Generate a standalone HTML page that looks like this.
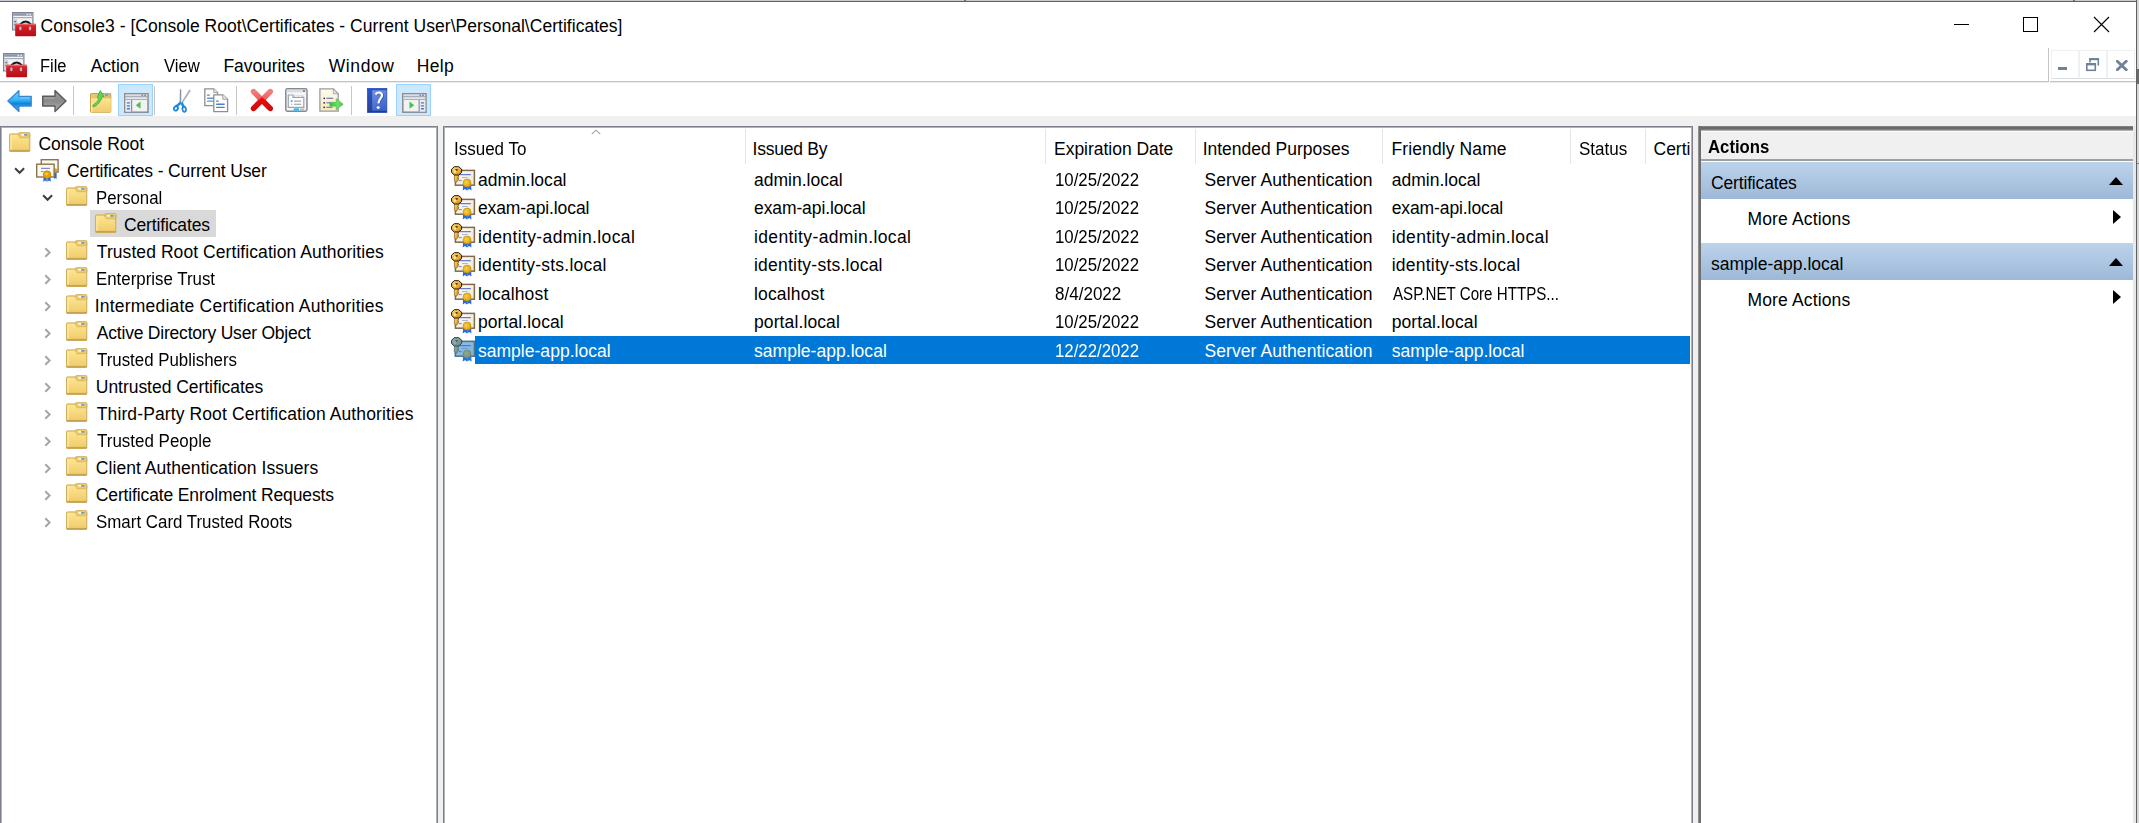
<!DOCTYPE html>
<html><head><meta charset="utf-8"><title>Console3</title><style>
html,body{margin:0;padding:0;}
body{width:2139px;height:823px;overflow:hidden;position:relative;background:#fff;font-family:"Liberation Sans",sans-serif;font-size:17.5px;color:#000;}
.t{position:absolute;white-space:nowrap;line-height:20px;}
.ic{position:absolute;display:block;}
.r{position:absolute;}
</style></head><body>
<svg width="0" height="0" style="position:absolute"><defs>
<linearGradient id="fgrad" x1="0" y1="0" x2="0" y2="1"><stop offset="0" stop-color="#fde58f"/><stop offset="1" stop-color="#f0cc6c"/></linearGradient>
<linearGradient id="paper" x1="0" y1="0" x2="1" y2="1"><stop offset="0" stop-color="#fffdf6"/><stop offset="1" stop-color="#ece6d6"/></linearGradient>
<radialGradient id="seal" cx="0.4" cy="0.4" r="0.7"><stop offset="0" stop-color="#f8d24a"/><stop offset="1" stop-color="#d99a00"/></radialGradient>
<linearGradient id="keyg" x1="0" y1="0" x2="1" y2="1"><stop offset="0" stop-color="#fbe08a"/><stop offset="0.55" stop-color="#eeb13a"/><stop offset="1" stop-color="#c8841a"/></linearGradient>
<filter id="seltint" x="0" y="0" width="1" height="1" color-interpolation-filters="sRGB"><feFlood flood-color="#1a80dc" flood-opacity="0.5"/><feComposite in2="SourceAlpha" operator="in"/><feBlend in2="SourceGraphic" mode="normal"/></filter>
<linearGradient id="bluehdr" x1="0" y1="0" x2="0" y2="1"><stop offset="0" stop-color="#bcd3eb"/><stop offset="1" stop-color="#9db8d8"/></linearGradient>
</defs></svg>
<div class="r" style="left:0;top:0;width:2139px;height:1px;background:#c9cacd"></div>
<div class="r" style="left:0;top:1px;width:2137px;height:1px;background:#5f6062"></div>
<div class="r" style="left:964px;top:0;width:2px;height:1px;background:#707070"></div>
<div class="r" style="left:2073px;top:0;width:2px;height:1px;background:#707070"></div>
<div class="r" style="left:2136px;top:0;width:1px;height:823px;background:#5f6062"></div>
<div class="r" style="left:2137px;top:0;width:2px;height:823px;background:#d6d6d6"></div>
<div class="r" style="left:2137px;top:69px;width:2px;height:15px;background:#6a6a6a"></div>
<div class="r" style="left:2137px;top:163px;width:2px;height:1px;background:#3aa08a"></div>
<svg class="ic" style="left:12px;top:12px" width="25" height="25" viewBox="0 0 25 25">
<rect x="0.6" y="0.6" width="20.3" height="17.3" fill="#f2f3f6" stroke="#7d8594" stroke-width="1.2"/>
<rect x="1.2" y="1.2" width="19.1" height="2.6" fill="#8f98a8"/>
<rect x="14.5" y="1.8" width="1.6" height="1.4" fill="#e8ebf0"/><rect x="17.3" y="1.8" width="1.6" height="1.4" fill="#e8ebf0"/>
<rect x="1.2" y="5" width="19.1" height="1.2" fill="#a3abb8"/>
<rect x="1.2" y="7.2" width="4" height="10" fill="#c9ced8"/>
<rect x="2.3" y="9" width="1.8" height="1.2" fill="#6a7384"/><rect x="2.3" y="12" width="1.8" height="1.2" fill="#6a7384"/>
<path d="M8.2 12.3 q5.4 -5.6 10.8 0" stroke="#1a1a1a" stroke-width="1.8" fill="none"/>
<defs><linearGradient id="tbx" x1="0" y1="0" x2="0" y2="1"><stop offset="0" stop-color="#e3343a"/><stop offset="0.35" stop-color="#cf1b23"/><stop offset="1" stop-color="#b30f18"/></linearGradient></defs>
<rect x="3.2" y="11.8" width="20.8" height="12.4" rx="0.6" fill="url(#tbx)"/>
<rect x="3.2" y="11.8" width="20.8" height="1" fill="#f06a6e"/>
<rect x="7.3" y="14.6" width="2.2" height="3.6" rx="1" fill="#b9bcc2"/><rect x="16.9" y="14.6" width="2.2" height="3.6" rx="1" fill="#b9bcc2"/>
</svg><div class="t" style="left:40.60px;top:15.94px;letter-spacing:0.030px;">Console3 - [Console Root\Certificates - Current User\Personal\Certificates]</div>
<div class="r" style="left:1954px;top:24px;width:15px;height:1px;background:#000"></div>
<div class="r" style="left:2023px;top:17px;width:13px;height:13px;border:1px solid #000"></div>
<svg class="ic" style="left:2093px;top:16px" width="17" height="17" viewBox="0 0 17 17"><path d="M1 1 L16 16 M16 1 L1 16" stroke="#000" stroke-width="1.1"/></svg>
<svg class="ic" style="left:3px;top:53px" width="25" height="25" viewBox="0 0 25 25">
<rect x="0.6" y="0.6" width="20.3" height="17.3" fill="#f2f3f6" stroke="#7d8594" stroke-width="1.2"/>
<rect x="1.2" y="1.2" width="19.1" height="2.6" fill="#8f98a8"/>
<rect x="14.5" y="1.8" width="1.6" height="1.4" fill="#e8ebf0"/><rect x="17.3" y="1.8" width="1.6" height="1.4" fill="#e8ebf0"/>
<rect x="1.2" y="5" width="19.1" height="1.2" fill="#a3abb8"/>
<rect x="1.2" y="7.2" width="4" height="10" fill="#c9ced8"/>
<rect x="2.3" y="9" width="1.8" height="1.2" fill="#6a7384"/><rect x="2.3" y="12" width="1.8" height="1.2" fill="#6a7384"/>
<path d="M8.2 12.3 q5.4 -5.6 10.8 0" stroke="#1a1a1a" stroke-width="1.8" fill="none"/>
<defs><linearGradient id="tbx" x1="0" y1="0" x2="0" y2="1"><stop offset="0" stop-color="#e3343a"/><stop offset="0.35" stop-color="#cf1b23"/><stop offset="1" stop-color="#b30f18"/></linearGradient></defs>
<rect x="3.2" y="11.8" width="20.8" height="12.4" rx="0.6" fill="url(#tbx)"/>
<rect x="3.2" y="11.8" width="20.8" height="1" fill="#f06a6e"/>
<rect x="7.3" y="14.6" width="2.2" height="3.6" rx="1" fill="#b9bcc2"/><rect x="16.9" y="14.6" width="2.2" height="3.6" rx="1" fill="#b9bcc2"/>
</svg><div class="t" style="left:39.66px;top:56.24px;transform:scaleX(0.9407);transform-origin:0 0;">File</div>
<div class="t" style="left:90.70px;top:56.24px;letter-spacing:-0.020px;">Action</div>
<div class="t" style="left:164.10px;top:56.24px;transform:scaleX(0.9526);transform-origin:0 0;">View</div>
<div class="t" style="left:223.40px;top:56.24px;letter-spacing:-0.044px;">Favourites</div>
<div class="t" style="left:328.70px;top:56.24px;letter-spacing:0.600px;">Window</div>
<div class="t" style="left:416.80px;top:56.24px;letter-spacing:0.333px;">Help</div>
<div class="r" style="left:0;top:81px;width:2049px;height:1px;background:#c4c4c4"></div>
<div class="r" style="left:0;top:82px;width:2049px;height:1px;background:#eaeaea"></div>
<div class="r" style="left:2048px;top:48px;width:1px;height:34px;background:#c4c4c4"></div>
<div class="r" style="left:2051px;top:50px;width:26px;height:27px;border:1px solid #eef0f3;border-bottom-color:#d8dbe0"></div>
<div class="r" style="left:2079px;top:50px;width:26px;height:27px;border:1px solid #eef0f3;border-bottom-color:#d8dbe0"></div>
<div class="r" style="left:2107px;top:50px;width:26px;height:27px;border:1px solid #eef0f3;border-bottom-color:#d8dbe0"></div>
<div class="r" style="left:2050px;top:81px;width:86px;height:1px;background:#c4c4c4"></div>
<div class="r" style="left:2050px;top:82px;width:86px;height:1px;background:#eaeaea"></div>
<div class="r" style="left:2058px;top:67px;width:9px;height:3.4px;background:#6f8296"></div>
<svg class="ic" style="left:2086px;top:58px" width="14" height="14" viewBox="0 0 14 14"><path d="M4 4.5 V0.8 H12.3 V7.5" fill="none" stroke="#6f8296" stroke-width="1.6"/><rect x="3.5" y="0" width="9.5" height="2.2" fill="#6f8296"/><rect x="0.8" y="5.8" width="8.5" height="6.5" fill="#fff" stroke="#6f8296" stroke-width="1.6"/><rect x="0" y="5" width="10" height="2.4" fill="#6f8296"/></svg>
<svg class="ic" style="left:2116px;top:60px" width="12" height="11" viewBox="0 0 12 11"><path d="M1.3 1.3 L10.2 9.7 M10.2 1.3 L1.3 9.7" stroke="#6f8296" stroke-width="2.8" stroke-linecap="square"/></svg>
<div class="r" style="left:118px;top:84px;width:33px;height:30px;background:#cce8ff;border:1px solid #99d1ff"></div>
<div class="r" style="left:396px;top:84px;width:33px;height:30px;background:#cce8ff;border:1px solid #99d1ff"></div>
<div class="r" style="left:73px;top:86px;width:1px;height:29px;background:#c6c6c6"></div>
<div class="r" style="left:154px;top:86px;width:1px;height:29px;background:#c6c6c6"></div>
<div class="r" style="left:236px;top:86px;width:1px;height:29px;background:#c6c6c6"></div>
<div class="r" style="left:351px;top:86px;width:1px;height:29px;background:#c6c6c6"></div>
<svg class="ic" style="left:7px;top:90px" width="25" height="23" viewBox="0 0 25 23">
<defs><linearGradient id="ba" x1="0" y1="0" x2="0" y2="1"><stop offset="0" stop-color="#7dcdfc"/><stop offset="0.45" stop-color="#35b4f8"/><stop offset="0.62" stop-color="#0c84e0"/><stop offset="1" stop-color="#4cb8f4"/></linearGradient></defs>
<path d="M0.9 11 L11.9 0.6 V6.3 H24.2 V16 H11.9 V21.5 Z" fill="url(#ba)" stroke="#3a86cc" stroke-width="1.3" stroke-linejoin="round"/>
<path d="M13 8 H22.5" stroke="#9fdcff" stroke-width="0.8" opacity="0.7"/></svg>
<svg class="ic" style="left:42px;top:90px" width="25" height="23" viewBox="0 0 25 23">
<defs><linearGradient id="fa" x1="0" y1="0" x2="0" y2="1"><stop offset="0" stop-color="#9a9a9a"/><stop offset="0.5" stop-color="#8a8a8a"/><stop offset="1" stop-color="#b0b0b0"/></linearGradient></defs>
<path d="M24 11 L13 0.6 V6.3 H0.7 V16 H13 V21.5 Z" fill="url(#fa)" stroke="#5a5a5a" stroke-width="1.4" stroke-linejoin="round"/>
<path d="M2 8 H12" stroke="#c8c8c8" stroke-width="0.8" opacity="0.6"/></svg>
<svg class="ic" style="left:90px;top:90px" width="22" height="23" viewBox="0 0 22 23">
<rect x="0.5" y="3.5" width="20.3" height="18.8" rx="0.8" fill="#e9c66a" stroke="#c9a24e"/>
<rect x="14" y="3.4" width="5.5" height="3.4" rx="1" fill="#ead49a" stroke="#c9a24e" stroke-width="0.6"/><rect x="15" y="4.3" width="3.4" height="1.4" fill="#4d90dc"/>
<path d="M1 22.3 V8.5 h19.8 v13.8z" fill="url(#fgrad)"/>
<rect x="1" y="8.5" width="1.6" height="13.6" fill="#fbe9a5"/>
<path d="M2.6 15.5 C4.5 14 7.8 12 8.8 8.5 L7.2 7.4 L10.2 0.6 L14 6.6 L12 6.8 C11.2 11.5 7.5 15.2 3.5 17z" fill="#5ed65a" stroke="#34a034" stroke-width="0.7" stroke-linejoin="round"/>
</svg>
<svg class="ic" style="left:124px;top:93px" width="25" height="20" viewBox="0 0 25 20">
<rect x="0.8" y="0.8" width="23.2" height="18.4" fill="#f2f2f3" stroke="#868b93" stroke-width="1.5"/>
<rect x="1.5" y="1.5" width="21.8" height="1.8" fill="#d9dce0"/><rect x="17.5" y="1.6" width="1.6" height="1.5" fill="#7c8390"/><rect x="20.3" y="1.6" width="1.6" height="1.5" fill="#7c8390"/>
<rect x="1.5" y="3.4" width="21.8" height="1" fill="#7f8792"/><rect x="1.5" y="4.4" width="21.8" height="1.6" fill="#e2e5e9"/><rect x="1.5" y="6" width="21.8" height="1" fill="#a9afb8"/>
<rect x="1.5" y="7" width="5.6" height="11.5" fill="#e9ebee"/><rect x="7.1" y="7" width="1.1" height="11.5" fill="#7f8792"/>
<rect x="2.8" y="9.3" width="3.2" height="1.3" rx="0.6" fill="#3f79c4"/><rect x="2.8" y="12.2" width="3.2" height="1.3" rx="0.6" fill="#3f79c4"/><rect x="2.8" y="15.1" width="3.2" height="1.3" rx="0.6" fill="#3f79c4"/>
<path d="M11.8 12.2 L16.5 8.6 V15.8z" fill="#4cbf4a"/></svg>
<svg class="ic" style="left:173px;top:88px" width="19" height="25" viewBox="0 0 19 25">
<path d="M6.9 0.6 L8.3 2 L8.2 15.5 L6.6 15.5z" fill="#8b939e"/>
<path d="M16.3 1.6 L17.8 2.8 L9.2 15.8 L8 14.8z" fill="#a9b1bb"/>
<path d="M8 14.5 L3.2 18.4" stroke="#1d8fe6" stroke-width="2.6"/>
<path d="M8.6 14.6 L10.6 19" stroke="#1d8fe6" stroke-width="2.6"/>
<ellipse cx="2.9" cy="20.4" rx="2.6" ry="2.9" transform="rotate(35 2.9 20.4)" fill="#1a8ee8" stroke="#0f6fc0" stroke-width="0.5"/>
<ellipse cx="2.9" cy="20.4" rx="1" ry="1.3" transform="rotate(35 2.9 20.4)" fill="#e8f4ff"/>
<ellipse cx="11.2" cy="21.2" rx="2.3" ry="3.3" transform="rotate(-10 11.2 21.2)" fill="#1a8ee8" stroke="#0f6fc0" stroke-width="0.5"/>
<ellipse cx="11.2" cy="21.4" rx="0.9" ry="1.6" transform="rotate(-10 11.2 21.4)" fill="#e8f4ff"/>
</svg>
<svg class="ic" style="left:204px;top:88px" width="25" height="25" viewBox="0 0 25 25">
<path d="M0.8 0.8 H9.8 L13.6 4.6 V17.6 H0.8z" fill="#fdfdfd" stroke="#8f8f8f" stroke-width="1.3"/>
<path d="M9.8 0.8 V4.6 H13.6" fill="#e8e8e8" stroke="#9a9a9a" stroke-width="0.9"/>
<rect x="3" y="6.5" width="2.8" height="1.3" rx="0.6" fill="#4d80c8"/><rect x="3" y="9.6" width="8" height="1.3" rx="0.6" fill="#6b90c8"/><rect x="3" y="12.5" width="8" height="1.3" rx="0.6" fill="#6b90c8"/>
<path d="M9.8 6.8 H18.8 L23.6 11.2 V23.6 H9.8z" fill="#fdfdfd" stroke="#8f8f8f" stroke-width="1.3"/>
<path d="M18.8 6.8 V11.2 H23.6" fill="#e8e8e8" stroke="#9a9a9a" stroke-width="0.9"/>
<rect x="12" y="12.5" width="2.8" height="1.3" rx="0.6" fill="#4d80c8"/><rect x="12" y="15.6" width="8.8" height="1.4" rx="0.7" fill="#4d80c8"/><rect x="12" y="18.7" width="8.8" height="1.4" rx="0.7" fill="#4d80c8"/></svg>
<svg class="ic" style="left:250px;top:88px" width="24" height="24" viewBox="0 0 24 24">
<defs><linearGradient id="xg" x1="0" y1="0" x2="0" y2="1"><stop offset="0" stop-color="#f47b7b"/><stop offset="0.42" stop-color="#f06060"/><stop offset="0.55" stop-color="#e80c0c"/><stop offset="1" stop-color="#d00a0a"/></linearGradient></defs>
<g stroke="url(#xg)" stroke-width="5.6" stroke-linecap="round"><path d="M3.6 3.6 L20.2 20.4"/><path d="M20.2 3.6 L3.6 20.4"/></g>
<path d="M12 9 L8 13 L12 16.5 L16 13z" fill="#e80a0a"/>
</svg>
<svg class="ic" style="left:285px;top:88px" width="23" height="24" viewBox="0 0 23 24">
<rect x="0.8" y="0.8" width="21.2" height="22.4" rx="1.6" fill="#f6f6f7" stroke="#85898f" stroke-width="1.5"/>
<rect x="1.6" y="1.7" width="19.6" height="2.6" fill="#d9dde2"/><rect x="18" y="2" width="2" height="1.8" fill="#6a7fa8"/>
<path d="M3.3 7 H8 V9.3 H18.8 V19.3 H3.3z" fill="#fff" stroke="#9ea3b0" stroke-width="1.2"/>
<rect x="8.5" y="7.4" width="9.8" height="1.6" fill="#c4c8d4"/><rect x="10" y="7.8" width="2.6" height="0.9" fill="#fff"/><rect x="13.8" y="7.8" width="2.6" height="0.9" fill="#fff"/>
<circle cx="6.7" cy="13.1" r="1" fill="#1ea8f5"/><rect x="9" y="12.6" width="7.2" height="1.1" fill="#9a9ea4"/>
<circle cx="6.7" cy="16.2" r="0.7" fill="#a8acb2"/><rect x="9" y="15.7" width="7.2" height="1.1" fill="#9a9ea4"/>
<rect x="8.8" y="20.4" width="5.2" height="2.2" fill="#22b8f8"/><rect x="15" y="20.6" width="4.3" height="1.8" fill="#b5b9be"/></svg>
<svg class="ic" style="left:319px;top:88px" width="25" height="24" viewBox="0 0 25 24">
<defs><linearGradient id="exg" x1="0" y1="0" x2="0" y2="1"><stop offset="0" stop-color="#fffcee"/><stop offset="1" stop-color="#f6e9bf"/></linearGradient>
<linearGradient id="arg" x1="0" y1="0" x2="1" y2="0"><stop offset="0" stop-color="#3cb83c"/><stop offset="0.6" stop-color="#6ee06a"/><stop offset="1" stop-color="#3cc43c"/></linearGradient></defs>
<path d="M0.9 0.9 H14.3 L19.2 5.8 V23.1 H0.9z" fill="url(#exg)" stroke="#9b9b9b" stroke-width="1.3"/>
<path d="M14.3 0.9 V5.8 H19.2z" fill="#e4e4e4" stroke="#a0a0a0" stroke-width="0.8"/>
<circle cx="5.2" cy="10.3" r="0.9" fill="#333"/><rect x="7.4" y="9.7" width="6.8" height="1.2" fill="#7a74b4"/>
<circle cx="5.2" cy="14.8" r="0.9" fill="#333"/><rect x="7.4" y="14.2" width="4" height="1.2" fill="#7a74b4"/>
<circle cx="5.2" cy="19.3" r="0.9" fill="#333"/><rect x="7.4" y="18.7" width="6" height="1.2" fill="#7a74b4"/>
<path d="M10.8 14.2 H17.2 V10.6 L24.2 16.2 L17.2 21.8 V18.2 H10.8z" fill="url(#arg)" stroke="#49b049" stroke-width="0.5" stroke-linejoin="round"/></svg>
<svg class="ic" style="left:367px;top:88px" width="21" height="25" viewBox="0 0 21 25">
<defs><linearGradient id="hg" x1="0" y1="0" x2="0.4" y2="1"><stop offset="0" stop-color="#7f9ce9"/><stop offset="1" stop-color="#3c64d0"/></linearGradient>
<linearGradient id="hl" x1="0" y1="0" x2="0" y2="1"><stop offset="0" stop-color="#2456d0"/><stop offset="1" stop-color="#2c4290"/></linearGradient></defs>
<rect x="0.4" y="0.4" width="19.4" height="24" fill="url(#hg)" stroke="#2c4cb8" stroke-width="0.8"/>
<rect x="0.8" y="0.8" width="4.4" height="23.2" fill="url(#hl)"/>
<rect x="0.8" y="22.8" width="19" height="1.4" fill="#2a3a78"/><rect x="0.8" y="0.8" width="19" height="1.4" fill="#2a50c8"/>
<path d="M8.8 6.6 C9.8 3.6 15.6 3.8 15 7.6 C14.6 10.4 11.8 10.8 11.4 15.4" stroke="#2a3c90" stroke-width="2.4" fill="none" opacity="0.45" transform="translate(0.9 0.6)"/>
<path d="M8.8 6.6 C9.8 3.6 15.6 3.8 15 7.6 C14.6 10.4 11.8 10.8 11.4 15.4" stroke="#fff" stroke-width="2.2" fill="none"/>
<ellipse cx="11.2" cy="19.6" rx="1.6" ry="1.3" fill="#fff"/></svg>
<svg class="ic" style="left:402px;top:93px" width="25" height="20" viewBox="0 0 25 20">
<rect x="0.8" y="0.8" width="23.2" height="18.4" fill="#f2f2f3" stroke="#868b93" stroke-width="1.5"/>
<rect x="1.5" y="1.5" width="21.8" height="1.8" fill="#d9dce0"/><rect x="17.5" y="1.6" width="1.6" height="1.5" fill="#7c8390"/><rect x="20.3" y="1.6" width="1.6" height="1.5" fill="#7c8390"/>
<rect x="1.5" y="3.4" width="21.8" height="1" fill="#7f8792"/><rect x="1.5" y="4.4" width="21.8" height="1.6" fill="#e2e5e9"/><rect x="1.5" y="6" width="21.8" height="1" fill="#a9afb8"/>
<rect x="17.7" y="7" width="5.6" height="11.5" fill="#e9ebee"/><rect x="16.6" y="7" width="1.1" height="11.5" fill="#7f8792"/>
<rect x="18.9" y="9.3" width="3.2" height="1.3" rx="0.6" fill="#3f79c4"/><rect x="18.9" y="12.2" width="3.2" height="1.3" rx="0.6" fill="#3f79c4"/><rect x="18.9" y="15.1" width="3.2" height="1.3" rx="0.6" fill="#3f79c4"/>
<path d="M7.5 8.6 L12.2 12.2 L7.5 15.8z" fill="#4cbf4a"/></svg>
<div class="r" style="left:0;top:116px;width:2136px;height:707px;background:#f0f0f0"></div>
<div class="r" style="left:0;top:126px;width:438px;height:697px;background:#fff;box-sizing:border-box;border-left:1px solid #7b8089;border-top:1px solid #7b8089;border-right:1px solid #7b8089;box-shadow:inset 1px 1px 0 #aeb2b9,inset -1px 0 0 #aeb2b9"></div>
<div class="r" style="left:443px;top:126px;width:1250px;height:697px;background:#fff;box-sizing:border-box;border-left:1px solid #7b8089;border-top:1px solid #7b8089;border-right:1px solid #7b8089;box-shadow:inset 1px 1px 0 #aeb2b9,inset -1px 0 0 #aeb2b9"></div>
<div class="r" style="left:1698px;top:126px;width:438px;height:697px;background:#fff;box-sizing:border-box;border-right:3px solid #e8e8e8"></div>
<div class="r" style="left:1698px;top:126px;width:435px;height:5px;background:linear-gradient(#8c8c8c,#6a6a6a 30%,#6a6a6a 62%,#c8c8c8)"></div>
<div class="r" style="left:1698px;top:126px;width:3px;height:697px;background:linear-gradient(90deg,#a8a8a8,#6e6e6e 40%,#6e6e6e 85%,#8a8a8a)"></div>
<div class="r" style="left:90px;top:210px;width:126px;height:27px;background:#d9d9d9"></div>
<svg class="ic" style="left:9px;top:132px" width="22" height="21" viewBox="0 0 22 21">
<rect x="0.5" y="1.9" width="20.3" height="17.5" rx="0.9" fill="#e6c263" stroke="#d2ae5e" stroke-width="1"/>
<rect x="9.6" y="0.4" width="11.2" height="5.6" rx="1.1" fill="#eaca70" stroke="#d2ae5e" stroke-width="0.9"/>
<rect x="12.4" y="2.1" width="2.8" height="1.5" fill="#ffffff"/><rect x="15.2" y="2.1" width="3.2" height="1.5" fill="#5a9ad8"/>
<path d="M1.3 18.6 V2.8 h7.6 l1.9 3.5 h9.2 v12.3z" fill="url(#fgrad)"/>
<rect x="1.3" y="3" width="1.4" height="15.5" fill="#fbeaa6"/>
<rect x="0.5" y="17.9" width="20.3" height="1.6" fill="#c6a251"/>
</svg><div class="t" style="left:38.50px;top:134.44px;letter-spacing:-0.045px;">Console Root</div>
<svg class="ic" style="left:35px;top:158px" width="24" height="24" viewBox="0 0 24 24">
<rect x="6.3" y="1.7" width="16.8" height="12.3" fill="#fbf8ef" stroke="#8a7350" stroke-width="1.4"/>
<path d="M19 11 v10 l1.3-1 l1.3 1 v-10z" fill="#2466e0"/><circle cx="20" cy="12.5" r="2.2" fill="#e5a507"/>
<rect x="1.7" y="6.2" width="17.4" height="12.8" fill="#fbf8ef" stroke="#8a7350" stroke-width="1.4"/>
<rect x="6" y="9.8" width="9" height="1.1" fill="#7080d0"/><rect x="6" y="13" width="2.5" height="1" fill="#8090d0"/>
<path d="M8.6 19.2 l-0.3 4.5 l1.8-1.2 l1.6 1.2 v-4.5z M12.3 19.2 v4.5 l1.7-1.2 l1.8 1.2 l-0.3-4.5z" fill="#2466e0"/>
<circle cx="12.1" cy="16.6" r="3.8" fill="#e5a507" stroke="#b98000" stroke-width="0.7"/>
<circle cx="11.5" cy="16" r="1.3" fill="#f7d35a"/>
</svg><svg class="ic" style="left:13.5px;top:167px" width="12" height="8" viewBox="0 0 12 8"><path d="M1.1 1.3 L5.6 5.8 L10.1 1.3" stroke="#3f3f3f" stroke-width="2" fill="none"/></svg><div class="t" style="left:67.10px;top:161.44px;letter-spacing:-0.138px;">Certificates - Current User</div>
<svg class="ic" style="left:66px;top:186px" width="22" height="21" viewBox="0 0 22 21">
<rect x="0.5" y="1.9" width="20.3" height="17.5" rx="0.9" fill="#e6c263" stroke="#d2ae5e" stroke-width="1"/>
<rect x="9.6" y="0.4" width="11.2" height="5.6" rx="1.1" fill="#eaca70" stroke="#d2ae5e" stroke-width="0.9"/>
<rect x="12.4" y="2.1" width="2.8" height="1.5" fill="#ffffff"/><rect x="15.2" y="2.1" width="3.2" height="1.5" fill="#5a9ad8"/>
<path d="M1.3 18.6 V2.8 h7.6 l1.9 3.5 h9.2 v12.3z" fill="url(#fgrad)"/>
<rect x="1.3" y="3" width="1.4" height="15.5" fill="#fbeaa6"/>
<rect x="0.5" y="17.9" width="20.3" height="1.6" fill="#c6a251"/>
</svg><svg class="ic" style="left:42.2px;top:194px" width="12" height="8" viewBox="0 0 12 8"><path d="M1.1 1.3 L5.6 5.8 L10.1 1.3" stroke="#3f3f3f" stroke-width="2" fill="none"/></svg><div class="t" style="left:95.84px;top:188.44px;transform:scaleX(0.9597);transform-origin:0 0;">Personal</div>
<svg class="ic" style="left:95px;top:213px" width="22" height="21" viewBox="0 0 22 21">
<rect x="0.5" y="1.9" width="20.3" height="17.5" rx="0.9" fill="#e6c263" stroke="#d2ae5e" stroke-width="1"/>
<rect x="9.6" y="0.4" width="11.2" height="5.6" rx="1.1" fill="#eaca70" stroke="#d2ae5e" stroke-width="0.9"/>
<rect x="12.4" y="2.1" width="2.8" height="1.5" fill="#ffffff"/><rect x="15.2" y="2.1" width="3.2" height="1.5" fill="#5a9ad8"/>
<path d="M1.3 18.6 V2.8 h7.6 l1.9 3.5 h9.2 v12.3z" fill="url(#fgrad)"/>
<rect x="1.3" y="3" width="1.4" height="15.5" fill="#fbeaa6"/>
<rect x="0.5" y="17.9" width="20.3" height="1.6" fill="#c6a251"/>
</svg><div class="t" style="left:124.00px;top:215.44px;letter-spacing:-0.136px;">Certificates</div>
<svg class="ic" style="left:66px;top:240px" width="22" height="21" viewBox="0 0 22 21">
<rect x="0.5" y="1.9" width="20.3" height="17.5" rx="0.9" fill="#e6c263" stroke="#d2ae5e" stroke-width="1"/>
<rect x="9.6" y="0.4" width="11.2" height="5.6" rx="1.1" fill="#eaca70" stroke="#d2ae5e" stroke-width="0.9"/>
<rect x="12.4" y="2.1" width="2.8" height="1.5" fill="#ffffff"/><rect x="15.2" y="2.1" width="3.2" height="1.5" fill="#5a9ad8"/>
<path d="M1.3 18.6 V2.8 h7.6 l1.9 3.5 h9.2 v12.3z" fill="url(#fgrad)"/>
<rect x="1.3" y="3" width="1.4" height="15.5" fill="#fbeaa6"/>
<rect x="0.5" y="17.9" width="20.3" height="1.6" fill="#c6a251"/>
</svg><svg class="ic" style="left:43.5px;top:247px" width="8" height="12" viewBox="0 0 8 12"><path d="M1.3 1.2 L5.6 5.5 L1.3 9.8" stroke="#a6a6a6" stroke-width="2" fill="none"/></svg><div class="t" style="left:96.80px;top:242.44px;letter-spacing:0.070px;">Trusted Root Certification Authorities</div>
<svg class="ic" style="left:66px;top:267px" width="22" height="21" viewBox="0 0 22 21">
<rect x="0.5" y="1.9" width="20.3" height="17.5" rx="0.9" fill="#e6c263" stroke="#d2ae5e" stroke-width="1"/>
<rect x="9.6" y="0.4" width="11.2" height="5.6" rx="1.1" fill="#eaca70" stroke="#d2ae5e" stroke-width="0.9"/>
<rect x="12.4" y="2.1" width="2.8" height="1.5" fill="#ffffff"/><rect x="15.2" y="2.1" width="3.2" height="1.5" fill="#5a9ad8"/>
<path d="M1.3 18.6 V2.8 h7.6 l1.9 3.5 h9.2 v12.3z" fill="url(#fgrad)"/>
<rect x="1.3" y="3" width="1.4" height="15.5" fill="#fbeaa6"/>
<rect x="0.5" y="17.9" width="20.3" height="1.6" fill="#c6a251"/>
</svg><svg class="ic" style="left:43.5px;top:274px" width="8" height="12" viewBox="0 0 8 12"><path d="M1.3 1.2 L5.6 5.5 L1.3 9.8" stroke="#a6a6a6" stroke-width="2" fill="none"/></svg><div class="t" style="left:95.84px;top:269.44px;transform:scaleX(0.9634);transform-origin:0 0;">Enterprise Trust</div>
<svg class="ic" style="left:66px;top:294px" width="22" height="21" viewBox="0 0 22 21">
<rect x="0.5" y="1.9" width="20.3" height="17.5" rx="0.9" fill="#e6c263" stroke="#d2ae5e" stroke-width="1"/>
<rect x="9.6" y="0.4" width="11.2" height="5.6" rx="1.1" fill="#eaca70" stroke="#d2ae5e" stroke-width="0.9"/>
<rect x="12.4" y="2.1" width="2.8" height="1.5" fill="#ffffff"/><rect x="15.2" y="2.1" width="3.2" height="1.5" fill="#5a9ad8"/>
<path d="M1.3 18.6 V2.8 h7.6 l1.9 3.5 h9.2 v12.3z" fill="url(#fgrad)"/>
<rect x="1.3" y="3" width="1.4" height="15.5" fill="#fbeaa6"/>
<rect x="0.5" y="17.9" width="20.3" height="1.6" fill="#c6a251"/>
</svg><svg class="ic" style="left:43.5px;top:301px" width="8" height="12" viewBox="0 0 8 12"><path d="M1.3 1.2 L5.6 5.5 L1.3 9.8" stroke="#a6a6a6" stroke-width="2" fill="none"/></svg><div class="t" style="left:94.80px;top:296.44px;letter-spacing:0.205px;">Intermediate Certification Authorities</div>
<svg class="ic" style="left:66px;top:321px" width="22" height="21" viewBox="0 0 22 21">
<rect x="0.5" y="1.9" width="20.3" height="17.5" rx="0.9" fill="#e6c263" stroke="#d2ae5e" stroke-width="1"/>
<rect x="9.6" y="0.4" width="11.2" height="5.6" rx="1.1" fill="#eaca70" stroke="#d2ae5e" stroke-width="0.9"/>
<rect x="12.4" y="2.1" width="2.8" height="1.5" fill="#ffffff"/><rect x="15.2" y="2.1" width="3.2" height="1.5" fill="#5a9ad8"/>
<path d="M1.3 18.6 V2.8 h7.6 l1.9 3.5 h9.2 v12.3z" fill="url(#fgrad)"/>
<rect x="1.3" y="3" width="1.4" height="15.5" fill="#fbeaa6"/>
<rect x="0.5" y="17.9" width="20.3" height="1.6" fill="#c6a251"/>
</svg><svg class="ic" style="left:43.5px;top:328px" width="8" height="12" viewBox="0 0 8 12"><path d="M1.3 1.2 L5.6 5.5 L1.3 9.8" stroke="#a6a6a6" stroke-width="2" fill="none"/></svg><div class="t" style="left:96.80px;top:323.44px;letter-spacing:-0.207px;">Active Directory User Object</div>
<svg class="ic" style="left:66px;top:348px" width="22" height="21" viewBox="0 0 22 21">
<rect x="0.5" y="1.9" width="20.3" height="17.5" rx="0.9" fill="#e6c263" stroke="#d2ae5e" stroke-width="1"/>
<rect x="9.6" y="0.4" width="11.2" height="5.6" rx="1.1" fill="#eaca70" stroke="#d2ae5e" stroke-width="0.9"/>
<rect x="12.4" y="2.1" width="2.8" height="1.5" fill="#ffffff"/><rect x="15.2" y="2.1" width="3.2" height="1.5" fill="#5a9ad8"/>
<path d="M1.3 18.6 V2.8 h7.6 l1.9 3.5 h9.2 v12.3z" fill="url(#fgrad)"/>
<rect x="1.3" y="3" width="1.4" height="15.5" fill="#fbeaa6"/>
<rect x="0.5" y="17.9" width="20.3" height="1.6" fill="#c6a251"/>
</svg><svg class="ic" style="left:43.5px;top:355px" width="8" height="12" viewBox="0 0 8 12"><path d="M1.3 1.2 L5.6 5.5 L1.3 9.8" stroke="#a6a6a6" stroke-width="2" fill="none"/></svg><div class="t" style="left:96.80px;top:350.44px;transform:scaleX(0.9634);transform-origin:0 0;">Trusted Publishers</div>
<svg class="ic" style="left:66px;top:375px" width="22" height="21" viewBox="0 0 22 21">
<rect x="0.5" y="1.9" width="20.3" height="17.5" rx="0.9" fill="#e6c263" stroke="#d2ae5e" stroke-width="1"/>
<rect x="9.6" y="0.4" width="11.2" height="5.6" rx="1.1" fill="#eaca70" stroke="#d2ae5e" stroke-width="0.9"/>
<rect x="12.4" y="2.1" width="2.8" height="1.5" fill="#ffffff"/><rect x="15.2" y="2.1" width="3.2" height="1.5" fill="#5a9ad8"/>
<path d="M1.3 18.6 V2.8 h7.6 l1.9 3.5 h9.2 v12.3z" fill="url(#fgrad)"/>
<rect x="1.3" y="3" width="1.4" height="15.5" fill="#fbeaa6"/>
<rect x="0.5" y="17.9" width="20.3" height="1.6" fill="#c6a251"/>
</svg><svg class="ic" style="left:43.5px;top:382px" width="8" height="12" viewBox="0 0 8 12"><path d="M1.3 1.2 L5.6 5.5 L1.3 9.8" stroke="#a6a6a6" stroke-width="2" fill="none"/></svg><div class="t" style="left:95.80px;top:377.44px;letter-spacing:-0.038px;">Untrusted Certificates</div>
<svg class="ic" style="left:66px;top:402px" width="22" height="21" viewBox="0 0 22 21">
<rect x="0.5" y="1.9" width="20.3" height="17.5" rx="0.9" fill="#e6c263" stroke="#d2ae5e" stroke-width="1"/>
<rect x="9.6" y="0.4" width="11.2" height="5.6" rx="1.1" fill="#eaca70" stroke="#d2ae5e" stroke-width="0.9"/>
<rect x="12.4" y="2.1" width="2.8" height="1.5" fill="#ffffff"/><rect x="15.2" y="2.1" width="3.2" height="1.5" fill="#5a9ad8"/>
<path d="M1.3 18.6 V2.8 h7.6 l1.9 3.5 h9.2 v12.3z" fill="url(#fgrad)"/>
<rect x="1.3" y="3" width="1.4" height="15.5" fill="#fbeaa6"/>
<rect x="0.5" y="17.9" width="20.3" height="1.6" fill="#c6a251"/>
</svg><svg class="ic" style="left:43.5px;top:409px" width="8" height="12" viewBox="0 0 8 12"><path d="M1.3 1.2 L5.6 5.5 L1.3 9.8" stroke="#a6a6a6" stroke-width="2" fill="none"/></svg><div class="t" style="left:96.80px;top:404.44px;letter-spacing:0.110px;">Third-Party Root Certification Authorities</div>
<svg class="ic" style="left:66px;top:429px" width="22" height="21" viewBox="0 0 22 21">
<rect x="0.5" y="1.9" width="20.3" height="17.5" rx="0.9" fill="#e6c263" stroke="#d2ae5e" stroke-width="1"/>
<rect x="9.6" y="0.4" width="11.2" height="5.6" rx="1.1" fill="#eaca70" stroke="#d2ae5e" stroke-width="0.9"/>
<rect x="12.4" y="2.1" width="2.8" height="1.5" fill="#ffffff"/><rect x="15.2" y="2.1" width="3.2" height="1.5" fill="#5a9ad8"/>
<path d="M1.3 18.6 V2.8 h7.6 l1.9 3.5 h9.2 v12.3z" fill="url(#fgrad)"/>
<rect x="1.3" y="3" width="1.4" height="15.5" fill="#fbeaa6"/>
<rect x="0.5" y="17.9" width="20.3" height="1.6" fill="#c6a251"/>
</svg><svg class="ic" style="left:43.5px;top:436px" width="8" height="12" viewBox="0 0 8 12"><path d="M1.3 1.2 L5.6 5.5 L1.3 9.8" stroke="#a6a6a6" stroke-width="2" fill="none"/></svg><div class="t" style="left:96.80px;top:431.44px;transform:scaleX(0.9692);transform-origin:0 0;">Trusted People</div>
<svg class="ic" style="left:66px;top:456px" width="22" height="21" viewBox="0 0 22 21">
<rect x="0.5" y="1.9" width="20.3" height="17.5" rx="0.9" fill="#e6c263" stroke="#d2ae5e" stroke-width="1"/>
<rect x="9.6" y="0.4" width="11.2" height="5.6" rx="1.1" fill="#eaca70" stroke="#d2ae5e" stroke-width="0.9"/>
<rect x="12.4" y="2.1" width="2.8" height="1.5" fill="#ffffff"/><rect x="15.2" y="2.1" width="3.2" height="1.5" fill="#5a9ad8"/>
<path d="M1.3 18.6 V2.8 h7.6 l1.9 3.5 h9.2 v12.3z" fill="url(#fgrad)"/>
<rect x="1.3" y="3" width="1.4" height="15.5" fill="#fbeaa6"/>
<rect x="0.5" y="17.9" width="20.3" height="1.6" fill="#c6a251"/>
</svg><svg class="ic" style="left:43.5px;top:463px" width="8" height="12" viewBox="0 0 8 12"><path d="M1.3 1.2 L5.6 5.5 L1.3 9.8" stroke="#a6a6a6" stroke-width="2" fill="none"/></svg><div class="t" style="left:95.80px;top:458.44px;letter-spacing:0.057px;">Client Authentication Issuers</div>
<svg class="ic" style="left:66px;top:483px" width="22" height="21" viewBox="0 0 22 21">
<rect x="0.5" y="1.9" width="20.3" height="17.5" rx="0.9" fill="#e6c263" stroke="#d2ae5e" stroke-width="1"/>
<rect x="9.6" y="0.4" width="11.2" height="5.6" rx="1.1" fill="#eaca70" stroke="#d2ae5e" stroke-width="0.9"/>
<rect x="12.4" y="2.1" width="2.8" height="1.5" fill="#ffffff"/><rect x="15.2" y="2.1" width="3.2" height="1.5" fill="#5a9ad8"/>
<path d="M1.3 18.6 V2.8 h7.6 l1.9 3.5 h9.2 v12.3z" fill="url(#fgrad)"/>
<rect x="1.3" y="3" width="1.4" height="15.5" fill="#fbeaa6"/>
<rect x="0.5" y="17.9" width="20.3" height="1.6" fill="#c6a251"/>
</svg><svg class="ic" style="left:43.5px;top:490px" width="8" height="12" viewBox="0 0 8 12"><path d="M1.3 1.2 L5.6 5.5 L1.3 9.8" stroke="#a6a6a6" stroke-width="2" fill="none"/></svg><div class="t" style="left:95.80px;top:485.44px;letter-spacing:-0.138px;">Certificate Enrolment Requests</div>
<svg class="ic" style="left:66px;top:510px" width="22" height="21" viewBox="0 0 22 21">
<rect x="0.5" y="1.9" width="20.3" height="17.5" rx="0.9" fill="#e6c263" stroke="#d2ae5e" stroke-width="1"/>
<rect x="9.6" y="0.4" width="11.2" height="5.6" rx="1.1" fill="#eaca70" stroke="#d2ae5e" stroke-width="0.9"/>
<rect x="12.4" y="2.1" width="2.8" height="1.5" fill="#ffffff"/><rect x="15.2" y="2.1" width="3.2" height="1.5" fill="#5a9ad8"/>
<path d="M1.3 18.6 V2.8 h7.6 l1.9 3.5 h9.2 v12.3z" fill="url(#fgrad)"/>
<rect x="1.3" y="3" width="1.4" height="15.5" fill="#fbeaa6"/>
<rect x="0.5" y="17.9" width="20.3" height="1.6" fill="#c6a251"/>
</svg><svg class="ic" style="left:43.5px;top:517px" width="8" height="12" viewBox="0 0 8 12"><path d="M1.3 1.2 L5.6 5.5 L1.3 9.8" stroke="#a6a6a6" stroke-width="2" fill="none"/></svg><div class="t" style="left:95.83px;top:512.44px;transform:scaleX(0.9658);transform-origin:0 0;">Smart Card Trusted Roots</div>
<div class="r" style="left:745px;top:129px;width:1px;height:35px;background:#e5e5e5"></div>
<div class="r" style="left:1045px;top:129px;width:1px;height:35px;background:#e5e5e5"></div>
<div class="r" style="left:1195px;top:129px;width:1px;height:35px;background:#e5e5e5"></div>
<div class="r" style="left:1382px;top:129px;width:1px;height:35px;background:#e5e5e5"></div>
<div class="r" style="left:1570px;top:129px;width:1px;height:35px;background:#e5e5e5"></div>
<div class="r" style="left:1645px;top:129px;width:1px;height:35px;background:#e5e5e5"></div>
<div class="t" style="left:453.96px;top:138.64px;transform:scaleX(0.9708);transform-origin:0 0;">Issued To</div>
<div class="t" style="left:752.60px;top:138.64px;letter-spacing:-0.237px;">Issued By</div>
<div class="t" style="left:1054.00px;top:138.64px;letter-spacing:-0.021px;">Expiration Date</div>
<div class="t" style="left:1202.70px;top:138.64px;letter-spacing:-0.013px;">Intended Purposes</div>
<div class="t" style="left:1391.50px;top:138.64px;letter-spacing:0.108px;">Friendly Name</div>
<div class="t" style="left:1579.23px;top:138.64px;transform:scaleX(0.9729);transform-origin:0 0;">Status</div>
<div class="t" style="left:1653.50px;top:138.64px;">Certi</div>
<svg class="ic" style="left:591px;top:129px" width="10" height="6" viewBox="0 0 10 6"><path d="M0.8 5.2 L5 1.2 L9.2 5.2" stroke="#a0a0a0" stroke-width="1.1" fill="none"/></svg>
<svg class="ic" style="left:451px;top:166px" width="25" height="25" viewBox="0 0 25 25"><g>
<rect x="4.4" y="4.4" width="19" height="14.8" fill="url(#paper)" stroke="#7f6b4b" stroke-width="1.5"/>
<rect x="8.2" y="8.1" width="11.7" height="1.1" fill="#5d6fcf"/><rect x="11" y="11" width="5.7" height="1" fill="#aab4e2"/><rect x="7.8" y="14.1" width="2.9" height="1" fill="#7585d0"/>
<path d="M12 19.8 l-0.2 4.7 l2.2-1.5 l2 1.5 v-4.7z M16.2 19.8 v4.7 l2-1.5 l2.2 1.5 l-0.2-4.7z" fill="#2a68e6"/>
<path d="M16.05 21.6 l-1.2 -1.6 h2.4z" fill="#1b2a55"/>
<circle cx="16.05" cy="17.1" r="4" fill="url(#seal)" stroke="#c08a00" stroke-width="0.6"/>
<path d="M3.4 8.2 h4.2 v2.6 h-0.8 v1.2 h0.8 v1.4 h-0.8 v1.2 l-1.2 1.6 h-1.2 l-1 -1.4z" fill="url(#keyg)" stroke="#5a3c0c" stroke-width="0.5"/>
<path d="M3.3 0.7 h4.4 l2.9 2.5 v3.3 l-2.9 2.5 h-4.4 l-2.7 -2.5 v-3.3z" fill="url(#keyg)" stroke="#1e1404" stroke-width="1"/>
<ellipse cx="5.6" cy="3.8" rx="1.3" ry="0.9" fill="#4a3008"/>
<ellipse cx="4" cy="5.6" rx="1.2" ry="1.3" fill="#fff0b8" opacity="0.8"/>
</g></svg><div class="t" style="left:477.90px;top:169.64px;letter-spacing:0.010px;">admin.local</div>
<div class="t" style="left:754.00px;top:169.64px;letter-spacing:0.010px;">admin.local</div>
<div class="t" style="left:1054.54px;top:169.64px;transform:scaleX(0.9593);transform-origin:0 0;">10/25/2022</div>
<div class="t" style="left:1204.40px;top:169.64px;letter-spacing:0.090px;">Server Authentication</div>
<div class="t" style="left:1391.70px;top:169.64px;letter-spacing:0.010px;">admin.local</div>
<svg class="ic" style="left:451px;top:195px" width="25" height="25" viewBox="0 0 25 25"><g>
<rect x="4.4" y="4.4" width="19" height="14.8" fill="url(#paper)" stroke="#7f6b4b" stroke-width="1.5"/>
<rect x="8.2" y="8.1" width="11.7" height="1.1" fill="#5d6fcf"/><rect x="11" y="11" width="5.7" height="1" fill="#aab4e2"/><rect x="7.8" y="14.1" width="2.9" height="1" fill="#7585d0"/>
<path d="M12 19.8 l-0.2 4.7 l2.2-1.5 l2 1.5 v-4.7z M16.2 19.8 v4.7 l2-1.5 l2.2 1.5 l-0.2-4.7z" fill="#2a68e6"/>
<path d="M16.05 21.6 l-1.2 -1.6 h2.4z" fill="#1b2a55"/>
<circle cx="16.05" cy="17.1" r="4" fill="url(#seal)" stroke="#c08a00" stroke-width="0.6"/>
<path d="M3.4 8.2 h4.2 v2.6 h-0.8 v1.2 h0.8 v1.4 h-0.8 v1.2 l-1.2 1.6 h-1.2 l-1 -1.4z" fill="url(#keyg)" stroke="#5a3c0c" stroke-width="0.5"/>
<path d="M3.3 0.7 h4.4 l2.9 2.5 v3.3 l-2.9 2.5 h-4.4 l-2.7 -2.5 v-3.3z" fill="url(#keyg)" stroke="#1e1404" stroke-width="1"/>
<ellipse cx="5.6" cy="3.8" rx="1.3" ry="0.9" fill="#4a3008"/>
<ellipse cx="4" cy="5.6" rx="1.2" ry="1.3" fill="#fff0b8" opacity="0.8"/>
</g></svg><div class="t" style="left:477.90px;top:198.17px;letter-spacing:-0.100px;">exam-api.local</div>
<div class="t" style="left:754.00px;top:198.17px;letter-spacing:-0.100px;">exam-api.local</div>
<div class="t" style="left:1054.54px;top:198.17px;transform:scaleX(0.9593);transform-origin:0 0;">10/25/2022</div>
<div class="t" style="left:1204.40px;top:198.17px;letter-spacing:0.090px;">Server Authentication</div>
<div class="t" style="left:1391.70px;top:198.17px;letter-spacing:-0.100px;">exam-api.local</div>
<svg class="ic" style="left:451px;top:223px" width="25" height="25" viewBox="0 0 25 25"><g>
<rect x="4.4" y="4.4" width="19" height="14.8" fill="url(#paper)" stroke="#7f6b4b" stroke-width="1.5"/>
<rect x="8.2" y="8.1" width="11.7" height="1.1" fill="#5d6fcf"/><rect x="11" y="11" width="5.7" height="1" fill="#aab4e2"/><rect x="7.8" y="14.1" width="2.9" height="1" fill="#7585d0"/>
<path d="M12 19.8 l-0.2 4.7 l2.2-1.5 l2 1.5 v-4.7z M16.2 19.8 v4.7 l2-1.5 l2.2 1.5 l-0.2-4.7z" fill="#2a68e6"/>
<path d="M16.05 21.6 l-1.2 -1.6 h2.4z" fill="#1b2a55"/>
<circle cx="16.05" cy="17.1" r="4" fill="url(#seal)" stroke="#c08a00" stroke-width="0.6"/>
<path d="M3.4 8.2 h4.2 v2.6 h-0.8 v1.2 h0.8 v1.4 h-0.8 v1.2 l-1.2 1.6 h-1.2 l-1 -1.4z" fill="url(#keyg)" stroke="#5a3c0c" stroke-width="0.5"/>
<path d="M3.3 0.7 h4.4 l2.9 2.5 v3.3 l-2.9 2.5 h-4.4 l-2.7 -2.5 v-3.3z" fill="url(#keyg)" stroke="#1e1404" stroke-width="1"/>
<ellipse cx="5.6" cy="3.8" rx="1.3" ry="0.9" fill="#4a3008"/>
<ellipse cx="4" cy="5.6" rx="1.2" ry="1.3" fill="#fff0b8" opacity="0.8"/>
</g></svg><div class="t" style="left:477.90px;top:226.70px;letter-spacing:0.374px;">identity-admin.local</div>
<div class="t" style="left:754.00px;top:226.70px;letter-spacing:0.374px;">identity-admin.local</div>
<div class="t" style="left:1054.54px;top:226.70px;transform:scaleX(0.9593);transform-origin:0 0;">10/25/2022</div>
<div class="t" style="left:1204.40px;top:226.70px;letter-spacing:0.090px;">Server Authentication</div>
<div class="t" style="left:1391.70px;top:226.70px;letter-spacing:0.374px;">identity-admin.local</div>
<svg class="ic" style="left:451px;top:252px" width="25" height="25" viewBox="0 0 25 25"><g>
<rect x="4.4" y="4.4" width="19" height="14.8" fill="url(#paper)" stroke="#7f6b4b" stroke-width="1.5"/>
<rect x="8.2" y="8.1" width="11.7" height="1.1" fill="#5d6fcf"/><rect x="11" y="11" width="5.7" height="1" fill="#aab4e2"/><rect x="7.8" y="14.1" width="2.9" height="1" fill="#7585d0"/>
<path d="M12 19.8 l-0.2 4.7 l2.2-1.5 l2 1.5 v-4.7z M16.2 19.8 v4.7 l2-1.5 l2.2 1.5 l-0.2-4.7z" fill="#2a68e6"/>
<path d="M16.05 21.6 l-1.2 -1.6 h2.4z" fill="#1b2a55"/>
<circle cx="16.05" cy="17.1" r="4" fill="url(#seal)" stroke="#c08a00" stroke-width="0.6"/>
<path d="M3.4 8.2 h4.2 v2.6 h-0.8 v1.2 h0.8 v1.4 h-0.8 v1.2 l-1.2 1.6 h-1.2 l-1 -1.4z" fill="url(#keyg)" stroke="#5a3c0c" stroke-width="0.5"/>
<path d="M3.3 0.7 h4.4 l2.9 2.5 v3.3 l-2.9 2.5 h-4.4 l-2.7 -2.5 v-3.3z" fill="url(#keyg)" stroke="#1e1404" stroke-width="1"/>
<ellipse cx="5.6" cy="3.8" rx="1.3" ry="0.9" fill="#4a3008"/>
<ellipse cx="4" cy="5.6" rx="1.2" ry="1.3" fill="#fff0b8" opacity="0.8"/>
</g></svg><div class="t" style="left:477.90px;top:255.23px;letter-spacing:0.235px;">identity-sts.local</div>
<div class="t" style="left:754.00px;top:255.23px;letter-spacing:0.235px;">identity-sts.local</div>
<div class="t" style="left:1054.54px;top:255.23px;transform:scaleX(0.9593);transform-origin:0 0;">10/25/2022</div>
<div class="t" style="left:1204.40px;top:255.23px;letter-spacing:0.090px;">Server Authentication</div>
<div class="t" style="left:1391.70px;top:255.23px;letter-spacing:0.235px;">identity-sts.local</div>
<svg class="ic" style="left:451px;top:280px" width="25" height="25" viewBox="0 0 25 25"><g>
<rect x="4.4" y="4.4" width="19" height="14.8" fill="url(#paper)" stroke="#7f6b4b" stroke-width="1.5"/>
<rect x="8.2" y="8.1" width="11.7" height="1.1" fill="#5d6fcf"/><rect x="11" y="11" width="5.7" height="1" fill="#aab4e2"/><rect x="7.8" y="14.1" width="2.9" height="1" fill="#7585d0"/>
<path d="M12 19.8 l-0.2 4.7 l2.2-1.5 l2 1.5 v-4.7z M16.2 19.8 v4.7 l2-1.5 l2.2 1.5 l-0.2-4.7z" fill="#2a68e6"/>
<path d="M16.05 21.6 l-1.2 -1.6 h2.4z" fill="#1b2a55"/>
<circle cx="16.05" cy="17.1" r="4" fill="url(#seal)" stroke="#c08a00" stroke-width="0.6"/>
<path d="M3.4 8.2 h4.2 v2.6 h-0.8 v1.2 h0.8 v1.4 h-0.8 v1.2 l-1.2 1.6 h-1.2 l-1 -1.4z" fill="url(#keyg)" stroke="#5a3c0c" stroke-width="0.5"/>
<path d="M3.3 0.7 h4.4 l2.9 2.5 v3.3 l-2.9 2.5 h-4.4 l-2.7 -2.5 v-3.3z" fill="url(#keyg)" stroke="#1e1404" stroke-width="1"/>
<ellipse cx="5.6" cy="3.8" rx="1.3" ry="0.9" fill="#4a3008"/>
<ellipse cx="4" cy="5.6" rx="1.2" ry="1.3" fill="#fff0b8" opacity="0.8"/>
</g></svg><div class="t" style="left:477.90px;top:283.76px;letter-spacing:0.162px;">localhost</div>
<div class="t" style="left:754.00px;top:283.76px;letter-spacing:0.162px;">localhost</div>
<div class="t" style="left:1054.53px;top:283.76px;transform:scaleX(0.9731);transform-origin:0 0;">8/4/2022</div>
<div class="t" style="left:1204.40px;top:283.76px;letter-spacing:0.090px;">Server Authentication</div>
<div class="t" style="left:1392.70px;top:283.76px;transform:scaleX(0.8647);transform-origin:0 0;">ASP.NET Core HTTPS...</div>
<svg class="ic" style="left:451px;top:309px" width="25" height="25" viewBox="0 0 25 25"><g>
<rect x="4.4" y="4.4" width="19" height="14.8" fill="url(#paper)" stroke="#7f6b4b" stroke-width="1.5"/>
<rect x="8.2" y="8.1" width="11.7" height="1.1" fill="#5d6fcf"/><rect x="11" y="11" width="5.7" height="1" fill="#aab4e2"/><rect x="7.8" y="14.1" width="2.9" height="1" fill="#7585d0"/>
<path d="M12 19.8 l-0.2 4.7 l2.2-1.5 l2 1.5 v-4.7z M16.2 19.8 v4.7 l2-1.5 l2.2 1.5 l-0.2-4.7z" fill="#2a68e6"/>
<path d="M16.05 21.6 l-1.2 -1.6 h2.4z" fill="#1b2a55"/>
<circle cx="16.05" cy="17.1" r="4" fill="url(#seal)" stroke="#c08a00" stroke-width="0.6"/>
<path d="M3.4 8.2 h4.2 v2.6 h-0.8 v1.2 h0.8 v1.4 h-0.8 v1.2 l-1.2 1.6 h-1.2 l-1 -1.4z" fill="url(#keyg)" stroke="#5a3c0c" stroke-width="0.5"/>
<path d="M3.3 0.7 h4.4 l2.9 2.5 v3.3 l-2.9 2.5 h-4.4 l-2.7 -2.5 v-3.3z" fill="url(#keyg)" stroke="#1e1404" stroke-width="1"/>
<ellipse cx="5.6" cy="3.8" rx="1.3" ry="0.9" fill="#4a3008"/>
<ellipse cx="4" cy="5.6" rx="1.2" ry="1.3" fill="#fff0b8" opacity="0.8"/>
</g></svg><div class="t" style="left:477.90px;top:312.29px;letter-spacing:0.109px;">portal.local</div>
<div class="t" style="left:754.00px;top:312.29px;letter-spacing:0.109px;">portal.local</div>
<div class="t" style="left:1054.54px;top:312.29px;transform:scaleX(0.9593);transform-origin:0 0;">10/25/2022</div>
<div class="t" style="left:1204.40px;top:312.29px;letter-spacing:0.090px;">Server Authentication</div>
<div class="t" style="left:1391.70px;top:312.29px;letter-spacing:0.109px;">portal.local</div>
<div class="r" style="left:475px;top:336px;width:1215px;height:28px;background:#0078d7"></div>
<svg class="ic" style="left:451px;top:337px" width="25" height="25" viewBox="0 0 25 25"><g filter="url(#seltint)">
<rect x="4.4" y="4.4" width="19" height="14.8" fill="url(#paper)" stroke="#7f6b4b" stroke-width="1.5"/>
<rect x="8.2" y="8.1" width="11.7" height="1.1" fill="#5d6fcf"/><rect x="11" y="11" width="5.7" height="1" fill="#aab4e2"/><rect x="7.8" y="14.1" width="2.9" height="1" fill="#7585d0"/>
<path d="M12 19.8 l-0.2 4.7 l2.2-1.5 l2 1.5 v-4.7z M16.2 19.8 v4.7 l2-1.5 l2.2 1.5 l-0.2-4.7z" fill="#2a68e6"/>
<path d="M16.05 21.6 l-1.2 -1.6 h2.4z" fill="#1b2a55"/>
<circle cx="16.05" cy="17.1" r="4" fill="url(#seal)" stroke="#c08a00" stroke-width="0.6"/>
<path d="M3.4 8.2 h4.2 v2.6 h-0.8 v1.2 h0.8 v1.4 h-0.8 v1.2 l-1.2 1.6 h-1.2 l-1 -1.4z" fill="url(#keyg)" stroke="#5a3c0c" stroke-width="0.5"/>
<path d="M3.3 0.7 h4.4 l2.9 2.5 v3.3 l-2.9 2.5 h-4.4 l-2.7 -2.5 v-3.3z" fill="url(#keyg)" stroke="#1e1404" stroke-width="1"/>
<ellipse cx="5.6" cy="3.8" rx="1.3" ry="0.9" fill="#4a3008"/>
<ellipse cx="4" cy="5.6" rx="1.2" ry="1.3" fill="#fff0b8" opacity="0.8"/>
</g></svg><div class="t" style="left:477.90px;top:340.82px;color:#fff;letter-spacing:0.033px;">sample-app.local</div>
<div class="t" style="left:754.00px;top:340.82px;color:#fff;letter-spacing:0.033px;">sample-app.local</div>
<div class="t" style="left:1054.54px;top:340.82px;color:#fff;transform:scaleX(0.9593);transform-origin:0 0;">12/22/2022</div>
<div class="t" style="left:1204.40px;top:340.82px;color:#fff;letter-spacing:0.090px;">Server Authentication</div>
<div class="t" style="left:1391.70px;top:340.82px;color:#fff;letter-spacing:0.033px;">sample-app.local</div>
<div class="r" style="left:1701px;top:131px;width:432px;height:1px;background:#fdfdfd"></div>
<div class="r" style="left:1701px;top:132px;width:432px;height:27px;background:#f0f0f0"></div>
<div class="r" style="left:1701px;top:159px;width:432px;height:1.5px;background:#a0a0a0"></div>
<div class="t" style="left:1707.74px;top:136.94px;font-weight:bold;transform:scaleX(0.9556);transform-origin:0 0;">Actions</div>
<div class="r" style="left:1701px;top:162px;width:432px;height:37px;background:linear-gradient(#bcd3eb,#9db8d8)"></div>
<div class="t" style="left:1711.00px;top:172.94px;letter-spacing:-0.164px;">Certificates</div>
<svg class="ic" style="left:2109px;top:177px" width="14" height="8" viewBox="0 0 14 8"><path d="M0 8 L7 0 L14 8z" fill="#000"/></svg>
<div class="t" style="left:1747.50px;top:209.04px;letter-spacing:0.145px;">More Actions</div>
<svg class="ic" style="left:2113px;top:210px" width="8" height="14" viewBox="0 0 8 14"><path d="M0 0 L8 7 L0 14z" fill="#000"/></svg>
<div class="r" style="left:1701px;top:243px;width:432px;height:37px;background:linear-gradient(#bcd3eb,#9db8d8)"></div>
<div class="t" style="left:1711.00px;top:253.94px;letter-spacing:0.007px;">sample-app.local</div>
<svg class="ic" style="left:2109px;top:258px" width="14" height="8" viewBox="0 0 14 8"><path d="M0 8 L7 0 L14 8z" fill="#000"/></svg>
<div class="t" style="left:1747.50px;top:289.64px;letter-spacing:0.145px;">More Actions</div>
<svg class="ic" style="left:2113px;top:290px" width="8" height="14" viewBox="0 0 8 14"><path d="M0 0 L8 7 L0 14z" fill="#000"/></svg>
</body></html>
